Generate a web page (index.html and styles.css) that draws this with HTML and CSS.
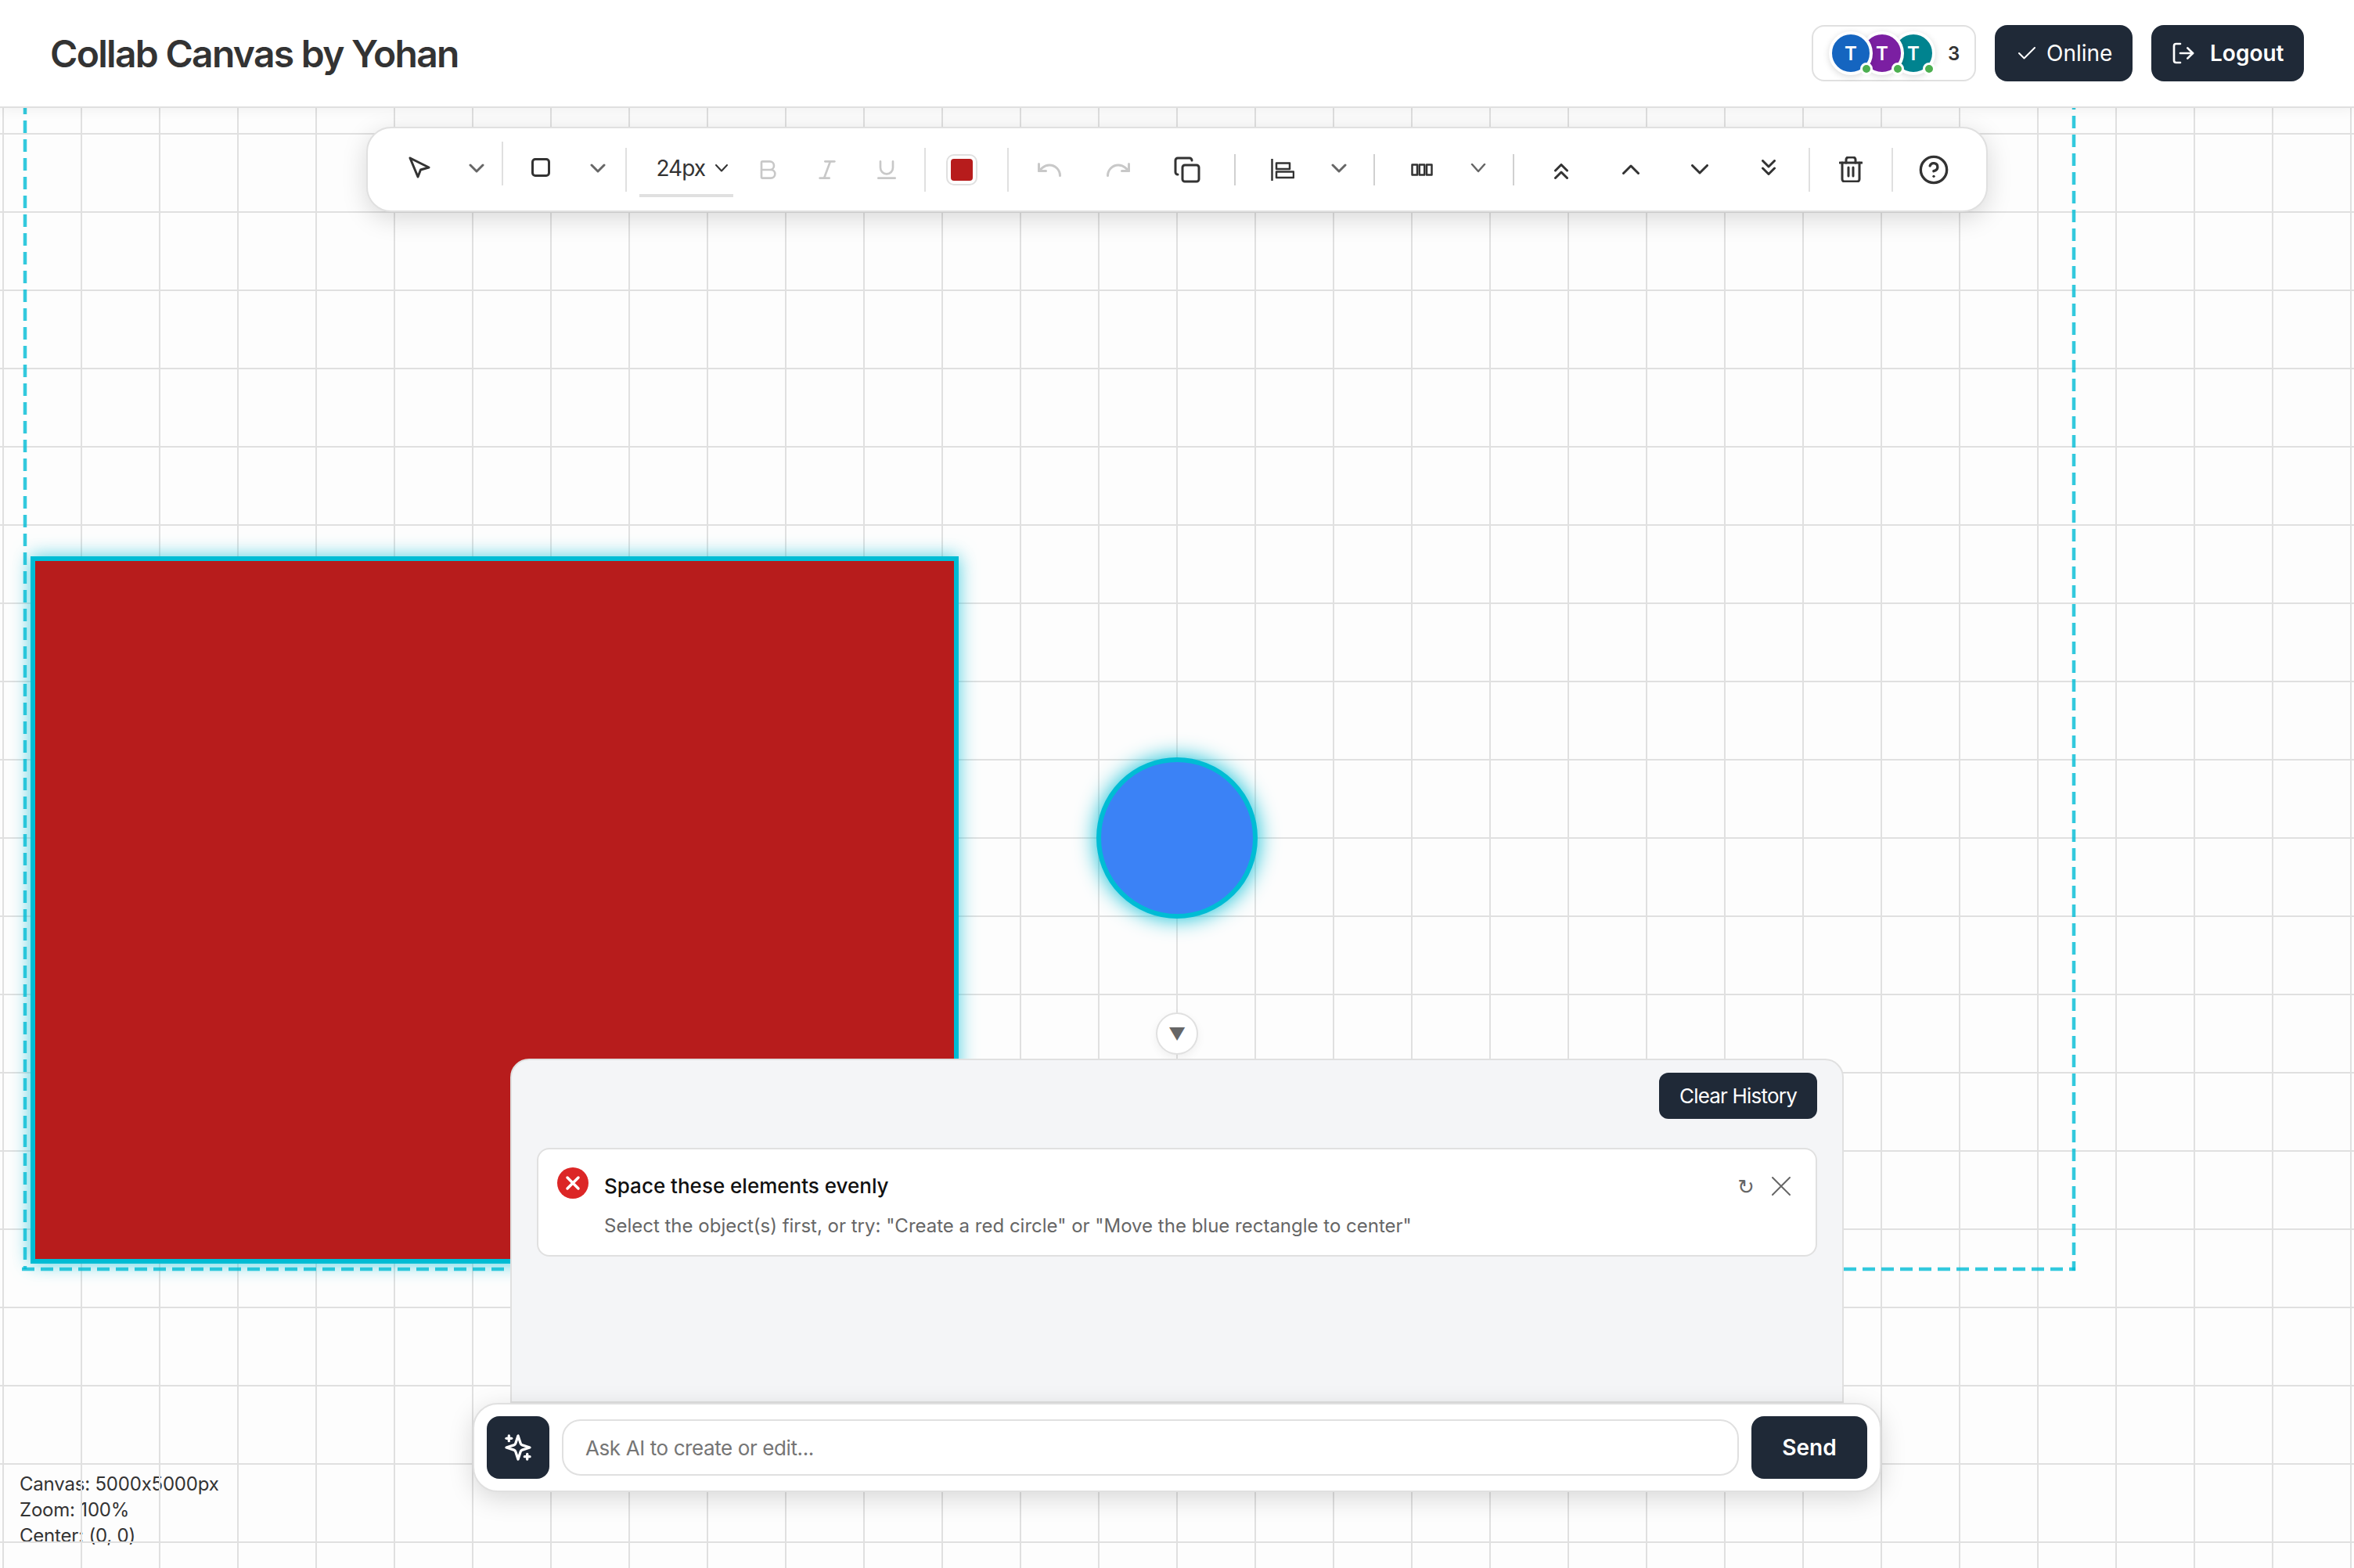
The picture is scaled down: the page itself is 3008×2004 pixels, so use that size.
FILE: index.html
```html
<!DOCTYPE html>
<html lang="en">

<head>
    <meta charset="UTF-8">
    <title>Collab Canvas by Yohan</title>
    <link rel="stylesheet" href="styles.css">
</head>

<body>
    <header class="topbar">
        <h1 class="title">Collab Canvas by Yohan</h1>
        <div class="topbar-right">
            <div class="users">
                <div class="avatars">
                    <span class="avatar av-blue">T<i class="dot"></i></span>
                    <span class="avatar av-purple">T<i class="dot"></i></span>
                    <span class="avatar av-teal">T<i class="dot"></i></span>
                </div>
                <span class="user-count">3</span>
            </div>
            <button class="dark-btn online-btn" type="button">
                <svg width="22" height="16" viewBox="0 0 22 16"><polyline points="1,8 7.5,14.5 21,1" /></svg>
                Online
            </button>
            <button class="dark-btn logout-btn" type="button">
                <svg width="32" height="32" viewBox="0 0 24 24"><path d="M9 21H5a2 2 0 0 1-2-2V5a2 2 0 0 1 2-2h4" /><polyline points="16 17 21 12 16 7" /><line x1="21" y1="12" x2="9" y2="12" /></svg>
                Logout
            </button>
        </div>
    </header>

    <main class="canvas">
        <div class="canvas-info">
            <div>Canvas: 5000x5000px</div>
            <div>Zoom: 100%</div>
            <div>Center: (0, 0)</div>
        </div>
        <div class="grid"></div>

        <svg class="stage" width="3008" height="1866" viewBox="0 138 3008 1866">
            <path class="bounds" d="M32 130V1622" />
            <path class="bounds" d="M2650 124V1624" />
            <path class="bounds" d="M28 1622H2652" />
            <rect class="shape shape-rect" x="42" y="714" width="1180" height="898" fill="#b71c1c" />
            <circle class="shape shape-circle" cx="1504" cy="1071" r="100" fill="#3b82f6" />
        </svg>

        <div class="toolbar">
            <div class="tools tools-shape">
                <span class="tool"><svg class="ic-dark ic-3" width="28" height="28" viewBox="0 0 28 28"><path d="M2 2 26 14 15.5 17 12 26Z" /></svg></span>
                <span class="tool"><svg class="ic-chev" width="20" height="12" viewBox="0 0 20 12"><polyline points="2,2 10,10 18,2" /></svg></span>
                <span class="tool"><i class="sep sep-high"></i></span>
                <span class="tool"><svg class="ic-dark ic-3 ic-square" width="24" height="24" viewBox="0 0 24 24"><rect x="1.5" y="1.5" width="21" height="21" rx="3.5" /></svg></span>
                <span class="tool"><svg class="ic-chev" width="20" height="12" viewBox="0 0 20 12"><polyline points="2,2 10,10 18,2" /></svg></span>
                <span class="tool"><i class="sep sep-low"></i></span>
            </div>
            <div class="tools tools-edit">
                <span class="font-size">24px
                    <svg class="ic-thin" width="16" height="10" viewBox="0 0 16 10"><polyline points="1,1 8,8.5 15,1" /></svg>
                </span>
                <span class="tool"><svg class="ic-off" width="32" height="32" viewBox="0 0 24 24"><path d="M6 12h9a4 4 0 0 1 0 8H7a1 1 0 0 1-1-1V5a1 1 0 0 1 1-1h7a4 4 0 0 1 0 8" /></svg></span>
                <span class="tool"><svg class="ic-off" width="32" height="32" viewBox="0 0 24 24"><line x1="19" y1="4" x2="10" y2="4" /><line x1="14" y1="20" x2="5" y2="20" /><line x1="15" y1="4" x2="9" y2="20" /></svg></span>
                <span class="tool"><svg class="ic-off" width="32" height="32" viewBox="0 0 24 24"><path d="M6 4v6a6 6 0 0 0 12 0V4" /><line x1="4" y1="20" x2="20" y2="20" /></svg></span>
                <span class="tool"><i class="sep"></i></span>
                <span class="tool"><span class="swatch"><i></i></span></span>
                <span class="tool"><i class="sep"></i></span>
                <span class="tool"><svg class="ic-off" width="36" height="36" viewBox="0 0 24 24"><path d="M3 7v6h6" /><path d="M21 17a9 9 0 0 0-9-9 9 9 0 0 0-6 2.3L3 13" /></svg></span>
                <span class="tool"><svg class="ic-off" width="36" height="36" viewBox="0 0 24 24"><path d="M21 7v6h-6" /><path d="M3 17a9 9 0 0 1 9-9 9 9 0 0 1 6 2.3l3 2.7" /></svg></span>
                <span class="tool"><svg class="ic-dark" width="36" height="36" viewBox="0 0 24 24"><rect x="8" y="8" width="14" height="14" rx="2" /><path d="M4 16c-1.1 0-2-.9-2-2V4c0-1.1.9-2 2-2h10c1.1 0 2 .9 2 2" /></svg></span>
                <span class="tool"><i class="sep sep-short"></i></span>
                <span class="tool"><svg class="ic-dark ic-25" width="30" height="28" viewBox="0 0 30 28"><line x1="1.5" y1="0" x2="1.5" y2="28" /><rect x="7" y="5.5" width="17" height="7.5" /><rect x="7" y="16.5" width="22" height="7.5" /></svg></span>
                <span class="tool"><svg class="ic-chev" width="20" height="12" viewBox="0 0 20 12"><polyline points="2,2 10,10 18,2" /></svg></span>
                <span class="tool"><i class="sep sep-short"></i></span>
                <span class="tool"><svg class="ic-dark ic-25" width="28" height="16" viewBox="0 0 28 16"><rect x="1.5" y="1.5" width="6.5" height="13" /><rect x="10.75" y="1.5" width="6.5" height="13" /><rect x="20" y="1.5" width="6.5" height="13" /></svg></span>
                <span class="tool"><svg class="ic-chev ic-chev-thin" width="20" height="12" viewBox="0 0 20 12"><polyline points="2,1 10,10 18,1" /></svg></span>
                <span class="tool"><i class="sep sep-short"></i></span>
                <span class="tool tool-low"><svg class="ic-dark ic-3" width="18" height="20" viewBox="0 0 18 20"><polyline points="1.5,9 9,1.5 16.5,9" /><polyline points="1.5,18.5 9,11 16.5,18.5" /></svg></span>
                <span class="tool"><svg class="ic-dark ic-3" width="22" height="13" viewBox="0 0 22 13"><polyline points="1.5,11.5 11,2 20.5,11.5" /></svg></span>
                <span class="tool"><svg class="ic-dark ic-3" width="22" height="13" viewBox="0 0 22 13"><polyline points="1.5,1.5 11,11 20.5,1.5" /></svg></span>
                <span class="tool tool-high"><svg class="ic-dark ic-3" width="18" height="20" viewBox="0 0 18 20"><polyline points="1.5,1.5 9,9 16.5,1.5" /><polyline points="1.5,11 9,18.5 16.5,11" /></svg></span>
                <span class="tool"><i class="sep"></i></span>
                <span class="tool"><svg class="ic-dark ic-3" width="30" height="33" viewBox="0 0 30 33"><line x1="1" y1="8" x2="29" y2="8" /><path d="M9 8V4a3 3 0 0 1 3-3h6a3 3 0 0 1 3 3v4" /><path d="M4 8v21a3 3 0 0 0 3 3h16a3 3 0 0 0 3-3V8" /><line x1="12" y1="14" x2="12" y2="25" /><line x1="18" y1="14" x2="18" y2="25" /></svg></span>
                <span class="tool"><i class="sep"></i></span>
                <span class="tool"><svg class="ic-dark" width="40" height="40" viewBox="0 0 24 24"><circle cx="12" cy="12" r="10" /><path d="M9.09 9a3 3 0 0 1 5.83 1c0 2-3 3-3 3" /><line x1="12" y1="17" x2="12.01" y2="17" /></svg></span>
            </div>
        </div>

        <div class="ai-dock">
            <button class="collapse-btn" type="button">▼</button>
            <section class="ai-panel">
                <div class="panel-head">
                    <button class="clear-btn" type="button">Clear History</button>
                </div>
                <div class="msg-card">
                    <svg class="msg-icon" width="40" height="40" viewBox="0 0 40 40"><circle cx="20" cy="20" r="20" /><path d="M13 13 27 27M27 13 13 27" /></svg>
                    <div class="msg-body">
                        <div class="msg-title">Space these elements evenly</div>
                        <div class="msg-text">Select the object(s) first, or try: "Create a red circle" or "Move the blue rectangle to center"</div>
                    </div>
                    <div class="msg-actions">
                        <span class="retry">↻</span>
                        <svg class="msg-close" width="24" height="24" viewBox="0 0 24 24"><path d="M1 1 23 23M23 1 1 23" /></svg>
                    </div>
                </div>
            </section>
            <form class="ai-bar">
                <button class="ai-icon" type="button">
                    <svg width="40" height="40" viewBox="0 0 24 24"><path d="m12 3-1.912 5.813a2 2 0 0 1-1.275 1.275L3 12l5.813 1.912a2 2 0 0 1 1.275 1.275L12 21l1.912-5.813a2 2 0 0 1 1.275-1.275L21 12l-5.813-1.912a2 2 0 0 1-1.275-1.275L12 3Z" /><path d="M5 3v4" /><path d="M19 17v4" /><path d="M3 5h4" /><path d="M17 19h4" /></svg>
                </button>
                <input class="ai-input" type="text" placeholder="Ask AI to create or edit...">
                <button class="send-btn" type="button">Send</button>
            </form>
        </div>
    </main>
</body>

</html>
```
FILE: styles.css
```css
:root {
    --dark: #1f2937;
    --line: #e0e0e0;
    --text: #333;
    --muted: #666;
    --cyan: #00bcd4;
}

* {
    box-sizing: border-box;
}

html,
body {
    margin: 0;
    height: 100%;
    overflow: hidden;
}

body {
    display: flex;
    flex-direction: column;
    font-family: Inter, "Noto Sans", sans-serif;
    font-feature-settings: "calt" 0;
    color: var(--text);
    background: #fff;
}

button,
input {
    font-family: inherit;
    font-feature-settings: inherit;
}

svg {
    display: block;
    fill: none;
    stroke-linecap: round;
    stroke-linejoin: round;
}

/* top bar */
.topbar {
    position: relative;
    z-index: 10;
    flex: none;
    display: flex;
    align-items: center;
    justify-content: space-between;
    height: 138px;
    padding: 0 64px;
    background: #fff;
    border-bottom: 2px solid var(--line);
    box-shadow: 0 2px 16px rgba(0, 0, 0, 0.06);
}

.title {
    margin: 0;
    font-size: 48px;
    font-weight: 600;
    letter-spacing: -1.7px;
    color: var(--text);
}

.topbar-right {
    display: flex;
    align-items: center;
    gap: 24px;
}

.users {
    display: flex;
    align-items: center;
    width: 210px;
    height: 72px;
    padding-left: 20px;
    background: #fff;
    border: 2px solid var(--line);
    border-radius: 16px;
}

.avatars {
    display: flex;
}

.avatar {
    position: relative;
    display: flex;
    align-items: center;
    justify-content: center;
    width: 56px;
    height: 56px;
    margin-right: -16px;
    border: 4px solid #fff;
    border-radius: 50%;
    font-size: 24px;
    font-weight: 600;
    color: #fff;
    box-shadow: 0 2px 8px rgba(0, 0, 0, 0.15);
}

.av-blue {
    z-index: 3;
    background: #1565c0;
}

.av-purple {
    z-index: 2;
    background: #7b1fa2;
}

.av-teal {
    z-index: 1;
    background: #00838f;
}

.dot {
    position: absolute;
    right: -4px;
    bottom: -4px;
    width: 16px;
    height: 16px;
    background: #4caf50;
    border: 3px solid #fff;
    border-radius: 50%;
}

.user-count {
    margin-left: 32px;
    font-size: 24px;
    font-weight: 600;
}

.dark-btn {
    display: flex;
    align-items: center;
    height: 72px;
    background: var(--dark);
    border: none;
    border-radius: 16px;
    font-size: 28px;
    color: #fff;
}

.dark-btn svg {
    stroke: #fff;
    stroke-width: 2;
}

.online-btn {
    gap: 14px;
    width: 176px;
    padding-left: 30px;
    font-weight: 400;
}

.logout-btn {
    gap: 18px;
    width: 195px;
    padding-left: 25px;
    font-weight: 600;
}

/* canvas area */
.canvas {
    position: relative;
    flex: 1;
    overflow: hidden;
    background: #fdfdfd;
}

.canvas-info {
    position: absolute;
    left: 25px;
    bottom: 25px;
    font-size: 24px;
    line-height: 33px;
    letter-spacing: -0.2px;
    color: var(--text);
}

/* the grid sits over the info text, the lines cut through it */
.grid {
    position: absolute;
    inset: 0;
    background-image:
        linear-gradient(var(--line) 2px, transparent 2px),
        linear-gradient(90deg, var(--line) 2px, transparent 2px);
    background-size: 100px 100px;
    background-position: 3px 32px;
}

.stage {
    position: absolute;
    top: 0;
    left: 0;
}

.bounds {
    stroke: var(--cyan);
    stroke-width: 4.5;
    stroke-linecap: butt;
    stroke-dasharray: 16 8;
    opacity: 0.8;
}

.shape {
    stroke: var(--cyan);
    stroke-width: 6;
    stroke-linejoin: miter;
}

.shape-rect {
    filter: drop-shadow(0 0 12px rgba(0, 188, 212, 0.7));
}

.shape-circle {
    filter: drop-shadow(0 0 14px var(--cyan));
}

/* toolbar */
.toolbar {
    position: absolute;
    top: 24px;
    left: 468px;
    z-index: 5;
    display: flex;
    align-items: center;
    width: 2072px;
    height: 109px;
    padding-left: 21px;
    background: #fff;
    border: 2px solid var(--line);
    border-radius: 32px;
    box-shadow: 0 8px 32px rgba(0, 0, 0, 0.15);
}

.tools {
    display: grid;
    align-items: center;
    justify-items: center;
    height: 100%;
}

.tools-shape {
    grid-template-columns: 89px 58px 8px 91px 53px 20px;
    margin-right: 8px;
    padding-bottom: 6px;
}

.tools-edit {
    grid-template-columns:
        118px 90px 62px 90px 8px 86px 32px 74px 102px 74px 48px 74px 70px 20px 102px 42px 48px 74px 103px 73px 103px 2px 104px 2px 104px;
}

.tool {
    display: flex;
    align-items: center;
    justify-content: center;
}

.tool svg {
    stroke-width: 2;
}

.tool-low {
    margin-top: 5px;
}

.tool-high {
    margin-bottom: 5px;
}

.tool .ic-dark {
    stroke: var(--text);
}

.tool .ic-3 {
    stroke-width: 3;
}

.tool .ic-25 {
    stroke-width: 2.5;
}

.ic-square {
    margin-right: 2px;
}

.tool .ic-chev {
    margin-bottom: 4px;
    stroke: var(--muted);
    stroke-width: 3;
}

.tools-shape .tool .ic-chev {
    margin: 2px 0 0;
}

.tool .ic-chev-thin {
    stroke-width: 2.5;
}

.tool .ic-off {
    stroke: #c8c8c8;
}

.ic-thin {
    stroke: var(--text);
    stroke-width: 2;
}

.sep {
    display: block;
    width: 2px;
    height: 56px;
    background: var(--line);
}

.sep-high {
    margin-bottom: 10px;
}

.sep-low {
    margin-top: 6px;
}

.sep-short {
    height: 40px;
    background: #d0d0d0;
}

.font-size {
    display: flex;
    align-items: center;
    justify-content: flex-end;
    gap: 13px;
    width: 120px;
    height: 60px;
    padding: 0 7px 10px 0;
    margin-top: 11px;
    border-bottom: 4px solid var(--line);
    font-size: 28px;
    letter-spacing: -1px;
    color: var(--text);
}

.swatch {
    display: flex;
    align-items: center;
    justify-content: center;
    width: 40px;
    height: 40px;
    border: 2px solid var(--line);
    border-radius: 10px;
}

.swatch i {
    display: block;
    width: 28px;
    height: 28px;
    background: #b71c1c;
    border-radius: 4px;
}

/* AI dock */
.ai-dock {
    position: absolute;
    left: 0;
    right: 0;
    bottom: 97px;
    z-index: 5;
    display: flex;
    flex-direction: column;
    align-items: center;
}

.collapse-btn {
    width: 54px;
    height: 54px;
    margin-bottom: 5px;
    padding: 0;
    background: #fff;
    border: 2px solid var(--line);
    border-radius: 50%;
    font-size: 22px;
    line-height: 1;
    color: var(--muted);
    box-shadow: 0 4px 12px rgba(0, 0, 0, 0.06);
}

.ai-panel {
    width: 1704px;
    height: 440px;
    padding: 16px 32px 0;
    background: #f4f5f7;
    border: 2px solid var(--line);
    border-radius: 24px 24px 0 0;
}

.panel-head {
    display: flex;
    justify-content: flex-end;
    margin-bottom: 37px;
}

.clear-btn {
    width: 202px;
    height: 59px;
    padding: 0;
    background: var(--dark);
    border: none;
    border-radius: 12px;
    font-size: 26px;
    font-weight: 400;
    letter-spacing: -0.8px;
    color: #fff;
}

.msg-card {
    display: flex;
    align-items: flex-start;
    gap: 20px;
    height: 139px;
    padding: 23px 32px 0 24px;
    background: #fff;
    border: 2px solid var(--line);
    border-radius: 16px;
}

.msg-icon {
    flex: none;
}

.msg-icon circle {
    fill: #dc2626;
}

.msg-icon path {
    stroke: #fff;
    stroke-width: 3.5;
}

.msg-body {
    flex: 1;
}

.msg-title {
    margin-top: 6px;
    font-size: 26px;
    font-weight: 500;
    line-height: 36px;
    color: #111;
}

.msg-text {
    margin-top: 16px;
    font-size: 24px;
    line-height: 34px;
    color: var(--muted);
}

.msg-actions {
    display: flex;
    align-items: center;
    gap: 22px;
    margin-top: 11px;
}

.retry {
    padding-top: 2px;
    font-family: "DejaVu Sans", sans-serif;
    font-size: 26px;
    line-height: 24px;
    color: var(--muted);
}

.msg-close {
    stroke: var(--muted);
    stroke-width: 2;
}

.ai-bar {
    display: flex;
    align-items: center;
    gap: 16px;
    width: 1800px;
    height: 114px;
    padding: 0 16px;
    background: #fff;
    border: 2px solid var(--line);
    border-radius: 32px;
    box-shadow: 0 8px 32px rgba(0, 0, 0, 0.15);
}

.ai-icon {
    display: flex;
    align-items: center;
    justify-content: center;
    flex: none;
    width: 80px;
    height: 80px;
    padding: 0;
    background: var(--dark);
    border: none;
    border-radius: 16px;
}

.ai-icon svg {
    stroke: #fff;
    stroke-width: 2;
}

.ai-input {
    flex: 1;
    height: 72px;
    padding: 0 28px;
    background: #fff;
    border: 2px solid var(--line);
    border-radius: 24px;
    font-size: 26px;
    letter-spacing: -0.4px;
    outline: none;
}

.ai-input::placeholder {
    color: #757575;
}

.send-btn {
    flex: none;
    width: 148px;
    height: 80px;
    padding: 0;
    background: var(--dark);
    border: none;
    border-radius: 16px;
    font-size: 28px;
    font-weight: 600;
    color: #fff;
}
```
